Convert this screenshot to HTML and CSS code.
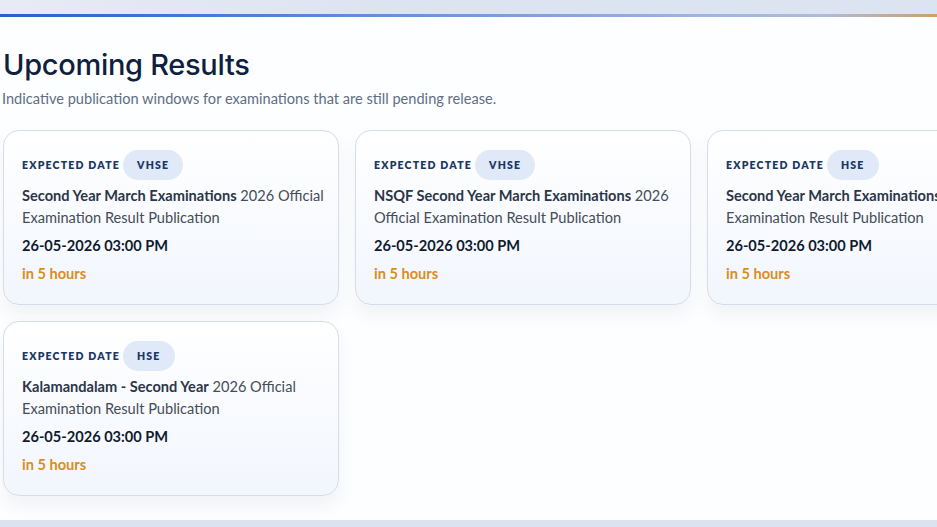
FILE: index.html
```html
<!DOCTYPE html>
<html lang="en">
<head>
<meta charset="utf-8">
<title>Upcoming Results</title>
<link rel="stylesheet" href="styles.css">
</head>
<body>
<div class="topband"></div>
<div class="accent"></div>
<main class="content">
  <h1 class="title">Upcoming Results</h1>
  <p class="subtitle">Indicative publication windows for examinations that are still pending release.</p>
  <div class="grid">
    <article class="card">
      <div class="meta"><span class="label">EXPECTED DATE</span><span class="pill">VHSE</span></div>
      <p class="exam"><strong>Second Year March Examinations</strong> 2026 Official Examination Result Publication</p>
      <p class="date">26-05-2026 03:00 PM</p>
      <p class="rel">in 5 hours</p>
    </article>
    <article class="card">
      <div class="meta"><span class="label">EXPECTED DATE</span><span class="pill">VHSE</span></div>
      <p class="exam"><strong>NSQF Second Year March Examinations</strong> 2026 Official Examination Result Publication</p>
      <p class="date">26-05-2026 03:00 PM</p>
      <p class="rel">in 5 hours</p>
    </article>
    <article class="card">
      <div class="meta"><span class="label">EXPECTED DATE</span><span class="pill">HSE</span></div>
      <p class="exam"><strong>Second Year March Examinations</strong> 2026 Official Examination Result Publication</p>
      <p class="date">26-05-2026 03:00 PM</p>
      <p class="rel">in 5 hours</p>
    </article>
    <article class="card">
      <div class="meta"><span class="label">EXPECTED DATE</span><span class="pill">HSE</span></div>
      <p class="exam"><strong>Kalamandalam - Second Year</strong> 2026 Official Examination Result Publication</p>
      <p class="date">26-05-2026 03:00 PM</p>
      <p class="rel">in 5 hours</p>
    </article>
  </div>
</main>
<div class="bottomband"></div>
</body>
</html>
```
FILE: styles.css
```css
html, body {
  margin: 0;
  padding: 0;
}
body {
  width: 937px;
  height: 527px;
  overflow: hidden;
  background: #fdfeff;
  font-family: "Lato", "Noto Sans", sans-serif;
  display: flex;
  flex-direction: column;
}
.topband {
  height: 14px;
  background: linear-gradient(90deg, #e6ebf5 0%, #dde4f1 40%, #dde4f1 100%);
}
.accent {
  height: 3px;
  background: linear-gradient(90deg, #2563c6 0%, #5b8ad6 35%, #9fb4e2 75%, #b2bad8 88%, #cda06a 100%);
}
.content {
  flex: 1;
  padding: 30px 0 0 3px;
  overflow: hidden;
}
.title {
  margin: 0;
  font-family: "Inter", "Noto Sans", sans-serif;
  font-weight: 500;
  font-size: 29px;
  line-height: 36px;
  letter-spacing: -0.3px;
  color: #0f1f3d;
}
.subtitle {
  margin: 6px 0 0 -1px;
  font-size: 14.6px;
  line-height: 20px;
  color: #5f6e82;
}
.grid {
  display: grid;
  grid-template-columns: repeat(3, 336px);
  gap: 16px;
  margin-top: 21px;
}
.card {
  box-sizing: border-box;
  height: 175px;
  padding: 19px 14px 0 18px;
  border: 1px solid #d5dde9;
  border-radius: 16px;
  background: linear-gradient(180deg, #ffffff 0%, #f2f6fd 100%);
  box-shadow: 0 10px 18px rgba(30, 50, 90, 0.06);
}
.meta {
  display: flex;
  align-items: center;
  gap: 3px;
  height: 30px;
}
.label {
  font-size: 10.5px;
  font-weight: 800;
  letter-spacing: 1.2px;
  color: #1b3766;
}
.pill {
  display: inline-flex;
  align-items: center;
  justify-content: center;
  height: 30px;
  padding: 0 14px;
  border-radius: 15px;
  background: #e0e9f7;
  font-size: 10.5px;
  font-weight: 800;
  letter-spacing: 1.2px;
  color: #1b3766;
}
.exam {
  margin: 5px 0 0;
  font-size: 14.6px;
  line-height: 22px;
  color: #454d58;
}
.exam strong {
  font-weight: 700;
  color: #2b3648;
}
.date {
  margin: 6px 0 0;
  font-size: 14.6px;
  line-height: 22px;
  font-weight: 700;
  color: #111a2e;
}
.rel {
  margin: 6px 0 0;
  font-size: 14.6px;
  line-height: 22px;
  font-weight: 700;
  color: #d98d22;
}
.bottomband {
  height: 7px;
  background: #dbe3ef;
}
```
